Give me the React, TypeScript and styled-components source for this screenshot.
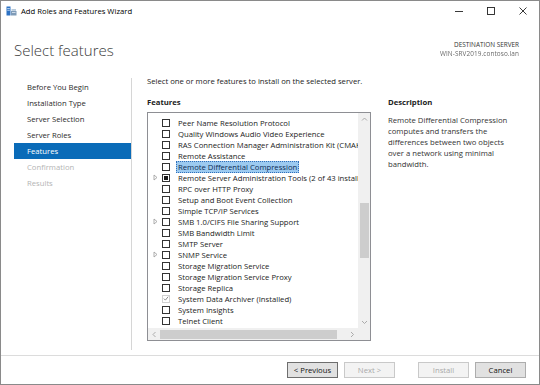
import styled, { createGlobalStyle } from "styled-components";

const GlobalStyle = createGlobalStyle`
  html, body {
    margin: 0;
    padding: 0;
    background: #ffffff;
  }
  body {
    font-family: "Open Sans", "Noto Sans", sans-serif;
    color: #1b1b1b;
  }
  * {
    box-sizing: border-box;
  }
`;

const Window = styled.div`
  width: 540px;
  height: 385px;
  border: 1px solid #8a8a8a;
  background: #ffffff;
  display: flex;
  flex-direction: column;
  overflow: hidden;
`;

const TitleBar = styled.div`
  height: 20px;
  display: flex;
  align-items: center;
  padding-left: 5px;
  font-size: 7.7px;
  color: #000;
`;

const TitleText = styled.span`
  margin-left: 4px;
`;

const Controls = styled.div`
  margin-left: auto;
  display: flex;
  height: 100%;
`;

const ControlBtn = styled.div`
  width: 32px;
  height: 100%;
  display: flex;
  align-items: center;
  justify-content: center;
`;

const Header = styled.div`
  height: 52px;
  display: flex;
  justify-content: space-between;
  padding: 0 20px 0 13px;
`;

const PageTitle = styled.h1`
  margin: 19px 0 0 0;
  font-size: 15px;
  line-height: 20px;
  font-weight: 300;
  color: #3a3a3a;
`;

const Destination = styled.div`
  margin-top: 19px;
  display: flex;
  flex-direction: column;
  align-items: flex-end;
  font-size: 6.4px;
  line-height: 9px;
  color: #333;
`;

const BlurredName = styled.span`
  color: #6a6a6a;
  filter: blur(0.6px);
  letter-spacing: 0.1px;
`;

const Body = styled.div`
  flex: 1;
  display: flex;
`;

const Nav = styled.ul`
  list-style: none;
  width: 131px;
  margin: 5px 0 5px 0;
  padding: 1px 0 0 13px;
  border-right: 1px solid #d6d6d6;
`;

const NavItem = styled.li<{ $active?: boolean; $disabled?: boolean }>`
  height: 16px;
  line-height: 16px;
  padding-left: 13px;
  font-size: 7.7px;
  background: ${(p) => (p.$active ? "#0a6bb8" : "transparent")};
  color: ${(p) => (p.$active ? "#ffffff" : p.$disabled ? "#b4b4b4" : "#2b2b2b")};
`;

const Main = styled.div`
  flex: 1;
  padding: 3px 0 0 15px;
  font-size: 7.7px;
`;

const Intro = styled.div`
  line-height: 11px;
`;

const Columns = styled.div`
  display: flex;
  margin-top: 10px;
`;

const FeaturesCol = styled.div`
  display: flex;
  flex-direction: column;
`;

const Label = styled.div`
  line-height: 11px;
  font-weight: 700;
  color: #222;
`;

const ListBox = styled.div`
  margin-top: 4px;
  width: 224px;
  height: 229px;
  border: 1px solid #8e8f94;
  display: grid;
  grid-template-columns: 210px 12px;
  grid-template-rows: 215px 12px;
`;

const ListContent = styled.div`
  overflow: hidden;
  padding-top: 4px;
`;

const Row = styled.div`
  height: 11px;
  display: flex;
  align-items: center;
  padding-left: 2px;
  white-space: nowrap;
`;

const Expander = styled.div`
  width: 10px;
  height: 11px;
  flex-shrink: 0;
  display: flex;
  align-items: center;
  justify-content: center;
`;

const Box = styled.div<{ $disabled?: boolean }>`
  width: 8px;
  height: 8px;
  margin-left: 2px;
  border: 1px solid ${(p) => (p.$disabled ? "#d0d0d0" : "#333333")};
  background: #fff;
  display: flex;
  align-items: center;
  justify-content: center;
  flex-shrink: 0;
`;

const Mixed = styled.div`
  width: 4px;
  height: 4px;
  background: #1a1a1a;
`;

const RowText = styled.span<{ $selected?: boolean }>`
  flex-shrink: 0;
  margin-left: 6px;
  line-height: 10px;
  padding: 0 1px;
  border: 1px dotted ${(p) => (p.$selected ? "#2f6fba" : "transparent")};
  background: ${(p) => (p.$selected ? "#9ccaf0" : "transparent")};
  color: ${(p) => (p.$selected ? "#0c2a52" : "#1b1b1b")};
`;

const VScroll = styled.div`
  background: #f0f0f0;
  display: flex;
  flex-direction: column;
  align-items: center;
`;

const HScroll = styled.div`
  background: #f0f0f0;
  display: flex;
  align-items: center;
`;

const Corner = styled.div`
  background: #f0f0f0;
`;

const ArrowBtn = styled.div`
  width: 12px;
  height: 12px;
  display: flex;
  align-items: center;
  justify-content: center;
  flex-shrink: 0;
`;

const VThumb = styled.div`
  width: 9px;
  height: 55px;
  margin-top: 78px;
  background: #cdcdcd;
`;

const HThumb = styled.div`
  width: 177px;
  height: 9px;
  background: #cdcdcd;
`;

const Spacer = styled.div`
  flex: 1;
`;

const DescCol = styled.div`
  margin-left: 17px;
  width: 135px;
`;

const DescText = styled.div`
  margin-top: 7px;
  line-height: 11px;
  color: #333;
  white-space: pre-line;
`;

const Footer = styled.div`
  height: 29px;
  border-top: 1px solid #dcdcdc;
  display: flex;
  align-items: center;
  justify-content: flex-end;
  padding-right: 13px;
`;

const Button = styled.button<{ $disabled?: boolean; $focus?: boolean; $gap: number }>`
  width: 51px;
  height: 16px;
  margin-left: ${(p) => p.$gap}px;
  padding: 0;
  font-family: "Open Sans", "Noto Sans", sans-serif;
  font-size: 7.7px;
  background: ${(p) => (p.$disabled ? "#f3f3f3" : "#e1e1e1")};
  border: 1px solid ${(p) => (p.$disabled ? "#c9c9c9" : p.$focus ? "#6e6e6e" : "#adadad")};
  color: ${(p) => (p.$disabled ? "#a9a9a9" : "#111")};
`;

type Feature = {
  name: string;
  expander?: boolean;
  state?: "checked" | "mixed";
  selected?: boolean;
};

const features: Feature[] = [
  { name: "Peer Name Resolution Protocol" },
  { name: "Quality Windows Audio Video Experience" },
  { name: "RAS Connection Manager Administration Kit (CMAK)" },
  { name: "Remote Assistance" },
  { name: "Remote Differential Compression", selected: true },
  { name: "Remote Server Administration Tools (2 of 43 installed)", expander: true, state: "mixed" },
  { name: "RPC over HTTP Proxy" },
  { name: "Setup and Boot Event Collection" },
  { name: "Simple TCP/IP Services" },
  { name: "SMB 1.0/CIFS File Sharing Support", expander: true },
  { name: "SMB Bandwidth Limit" },
  { name: "SMTP Server" },
  { name: "SNMP Service", expander: true },
  { name: "Storage Migration Service" },
  { name: "Storage Migration Service Proxy" },
  { name: "Storage Replica" },
  { name: "System Data Archiver (Installed)", state: "checked" },
  { name: "System Insights" },
  { name: "Telnet Client" },
];

const navItems = [
  "Before You Begin",
  "Installation Type",
  "Server Selection",
  "Server Roles",
  "Features",
  "Confirmation",
  "Results",
];

function AppIcon() {
  return (
    <svg width="11" height="10" viewBox="0 0 11 10">
      <rect x="0.5" y="0.5" width="4" height="9" fill="#2d72c4" />
      <rect x="1.2" y="2" width="2.6" height="0.8" fill="#d4e6f8" />
      <rect x="1.2" y="3.8" width="2.6" height="0.8" fill="#d4e6f8" />
      <rect x="5" y="5" width="5.5" height="4.5" fill="#7f9bb8" />
      <rect x="6" y="6.2" width="3.5" height="0.8" fill="#e3ecf5" />
      <rect x="5.5" y="3.2" width="4.5" height="1.5" fill="#a6bdd3" />
    </svg>
  );
}

function Chevron({ dir }: { dir: "up" | "down" | "left" | "right" }) {
  const paths = {
    up: "M1 4.5 L3.5 2 L6 4.5",
    down: "M1 2 L3.5 4.5 L6 2",
    left: "M4.5 1 L2 3.5 L4.5 6",
    right: "M2 1 L4.5 3.5 L2 6",
  };
  return (
    <svg width="7" height="7" viewBox="0 0 7 7">
      <path d={paths[dir]} fill="none" stroke="#a3a3a3" strokeWidth="0.9" />
    </svg>
  );
}

export default function App() {
  return (
    <>
      <GlobalStyle />
      <Window>
        <TitleBar>
          <AppIcon />
          <TitleText>Add Roles and Features Wizard</TitleText>
          <Controls>
            <ControlBtn>
              <svg width="10" height="10" viewBox="0 0 10 10">
                <path d="M1 5.5 H9" stroke="#222" strokeWidth="0.9" />
              </svg>
            </ControlBtn>
            <ControlBtn>
              <svg width="10" height="10" viewBox="0 0 10 10">
                <rect x="1.5" y="1.5" width="7" height="7" fill="none" stroke="#222" strokeWidth="0.9" />
              </svg>
            </ControlBtn>
            <ControlBtn>
              <svg width="10" height="10" viewBox="0 0 10 10">
                <path d="M1.5 1.5 L8.5 8.5 M8.5 1.5 L1.5 8.5" stroke="#222" strokeWidth="0.9" />
              </svg>
            </ControlBtn>
          </Controls>
        </TitleBar>

        <Header>
          <PageTitle>Select features</PageTitle>
          <Destination>
            <span>DESTINATION SERVER</span>
            <BlurredName>WIN-SRV2019.contoso.lan</BlurredName>
          </Destination>
        </Header>

        <Body>
          <Nav>
            {navItems.map((item, i) => (
              <NavItem key={item} $active={i === 4} $disabled={i > 4}>
                {item}
              </NavItem>
            ))}
          </Nav>

          <Main>
            <Intro>Select one or more features to install on the selected server.</Intro>
            <Columns>
              <FeaturesCol>
                <Label>Features</Label>
                <ListBox>
                  <ListContent>
                    {features.map((f) => (
                      <Row key={f.name}>
                        <Expander>
                          {f.expander && (
                            <svg width="5" height="7" viewBox="0 0 5 7">
                              <path d="M1 1 L4 3.5 L1 6 Z" fill="none" stroke="#9a9a9a" strokeWidth="0.8" />
                            </svg>
                          )}
                        </Expander>
                        <Box $disabled={f.state === "checked"}>
                          {f.state === "mixed" && <Mixed />}
                          {f.state === "checked" && (
                            <svg width="7" height="7" viewBox="0 0 7 7">
                              <path d="M1 3.6 L2.8 5.4 L6 1.4" fill="none" stroke="#777" strokeWidth="1" />
                            </svg>
                          )}
                        </Box>
                        <RowText $selected={f.selected}>{f.name}</RowText>
                      </Row>
                    ))}
                  </ListContent>
                  <VScroll>
                    <ArrowBtn>
                      <Chevron dir="up" />
                    </ArrowBtn>
                    <VThumb />
                    <Spacer />
                    <ArrowBtn>
                      <Chevron dir="down" />
                    </ArrowBtn>
                  </VScroll>
                  <HScroll>
                    <ArrowBtn>
                      <Chevron dir="left" />
                    </ArrowBtn>
                    <HThumb />
                    <Spacer />
                    <ArrowBtn>
                      <Chevron dir="right" />
                    </ArrowBtn>
                  </HScroll>
                  <Corner />
                </ListBox>
              </FeaturesCol>

              <DescCol>
                <Label>Description</Label>
                <DescText>
                  {"Remote Differential Compression\ncomputes and transfers the\ndifferences between two objects\nover a network using minimal\nbandwidth."}
                </DescText>
              </DescCol>
            </Columns>
          </Main>
        </Body>

        <Footer>
          <Button $gap={0} $focus>&lt; Previous</Button>
          <Button $gap={6} $disabled>Next &gt;</Button>
          <Button $gap={23} $disabled>Install</Button>
          <Button $gap={6}>Cancel</Button>
        </Footer>
      </Window>
    </>
  );
}
